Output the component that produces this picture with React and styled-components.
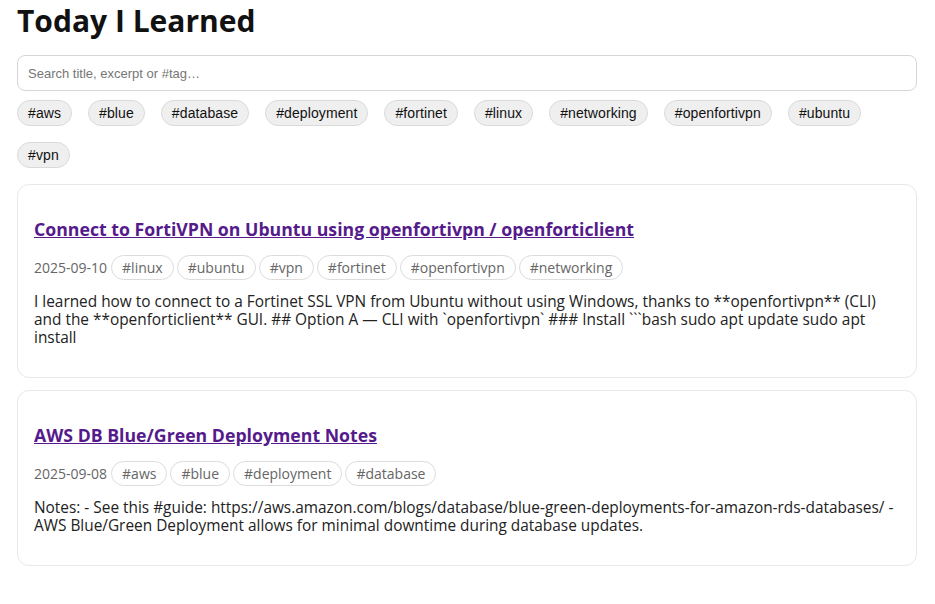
import styled, { createGlobalStyle } from 'styled-components';

const GlobalStyle = createGlobalStyle`
  body {
    margin: 0;
    background: #fff;
    color: #111;
    font-family: "Open Sans", "Noto Sans", sans-serif;
  }
`;

const TAGS = ['aws', 'blue', 'database', 'deployment', 'fortinet', 'linux', 'networking', 'openfortivpn', 'ubuntu', 'vpn'];

const POSTS = [
  {
    title: 'Connect to FortiVPN on Ubuntu using openfortivpn / openforticlient',
    date: '2025-09-10',
    tags: ['linux', 'ubuntu', 'vpn', 'fortinet', 'openfortivpn', 'networking'],
    excerpt:
      'I learned how to connect to a Fortinet SSL VPN from Ubuntu without using Windows, thanks to **openfortivpn** (CLI) and the **openforticlient** GUI. ## Option A — CLI with `openfortivpn` ### Install ```bash sudo apt update sudo apt install',
  },
  {
    title: 'AWS DB Blue/Green Deployment Notes',
    date: '2025-09-08',
    tags: ['aws', 'blue', 'deployment', 'database'],
    excerpt:
      'Notes: - See this #guide: https://aws.amazon.com/blogs/database/blue-green-deployments-for-amazon-rds-databases/ - AWS Blue/Green Deployment allows for minimal downtime during database updates.',
  },
];

const App = () => {
  return (
    <>
      <GlobalStyle />
      <Page>
        <Title>Today I Learned</Title>
        <Search placeholder="Search title, excerpt or #tag…" />
        <TagBar>
          {TAGS.map((t) => (
            <TagButton key={t}>#{t}</TagButton>
          ))}
        </TagBar>
        <List>
          {POSTS.map((p) => (
            <Card key={p.title}>
              <PostTitle>
                <a href="#">{p.title}</a>
              </PostTitle>
              <Meta>
                <DateText>{p.date}</DateText>
                {p.tags.map((t) => (
                  <Pill key={t}>#{t}</Pill>
                ))}
              </Meta>
              <Excerpt>{p.excerpt}</Excerpt>
            </Card>
          ))}
        </List>
      </Page>
    </>
  );
};

export default App;

const Page = styled.div`
  max-width: 900px;
  margin: 0 auto;
  padding-right: 1px;
`;

const Title = styled.h1`
  font-size: 30px;
  font-weight: 700;
  margin: 0 0 14px;
  line-height: 41px;
`;

const Search = styled.input`
  display: block;
  box-sizing: border-box;
  width: 100%;
  height: 36px;
  padding: 0 10px;
  border: 1px solid #d6d6d6;
  border-radius: 8px;
  font-family: "Liberation Sans", Arial, sans-serif;
  font-size: 13px;
  outline: none;
  &::placeholder {
    color: #767676;
  }
`;

const TagBar = styled.div`
  display: flex;
  flex-wrap: wrap;
  gap: 16px;
  margin-top: 9px;
`;

const TagButton = styled.button`
  height: 26px;
  padding: 0 10px;
  border: 1px solid #dadada;
  border-radius: 999px;
  background: #efefef;
  color: #111;
  font-family: "Liberation Sans", Arial, sans-serif;
  font-size: 14px;
  letter-spacing: 0.1px;
  cursor: pointer;
`;

const List = styled.div`
  display: flex;
  flex-direction: column;
  gap: 12px;
  margin-top: 16px;
`;

const Card = styled.article`
  border: 1px solid #e8e8e8;
  border-radius: 12px;
  padding: 16px 16px 30px;
`;

const PostTitle = styled.h2`
  font-size: 17.7px;
  font-weight: 700;
  line-height: 22px;
  margin: 17px 0 15px;
  a {
    color: #551a8b;
  }
`;

const Meta = styled.div`
  display: flex;
  align-items: center;
  flex-wrap: wrap;
  gap: 3px;
  color: #666;
  font-size: 14px;
`;

const DateText = styled.span`
  margin-right: 1px;
`;

const Pill = styled.span`
  display: inline-flex;
  align-items: center;
  box-sizing: border-box;
  height: 25px;
  padding: 0 10px;
  border: 1px solid #dcdcdc;
  border-radius: 999px;
  color: #666;
`;

const Excerpt = styled.p`
  margin: 13px 0 0;
  font-size: 15.4px;
  line-height: 18px;
  color: #222;
`;
